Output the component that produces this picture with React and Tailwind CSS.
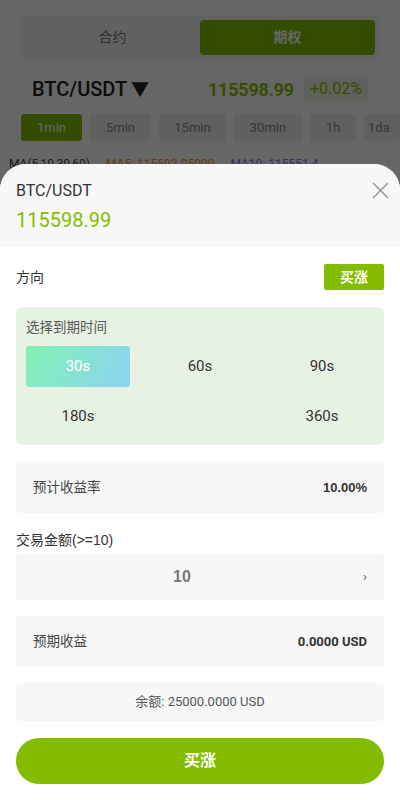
import React from "react";

const intervals = ["1min", "5min", "15min", "30min", "1h", "1day"];

export default function App() {
  return (
    <div
      className="relative w-[400px] h-[800px] overflow-hidden bg-white"
      style={{ fontFamily: "Roboto, 'Noto Sans CJK SC', sans-serif" }}
    >
      {/* Background page */}
      <div className="pt-[16px]">
        <div className="mx-[21px] h-[43px] rounded-[4px] bg-[#f3f4f5] flex items-center p-[4px]">
          <div className="flex-1 text-center text-[14px] text-[#777]">合约</div>
          <div className="w-[175px] h-[35px] rounded-[4px] bg-[#84bd00] flex items-center justify-center text-[14px] text-white font-bold">
            期权
          </div>
        </div>
        <div className="flex items-center h-[26px] mt-[17px] pl-[32px] pr-[32px]">
          <div className="text-[20px] font-medium text-[#222] flex items-center">
            BTC/USDT <span className="ml-[4px] text-[18px]">▼</span>
          </div>
          <div className="ml-auto text-[18px] font-bold text-[#84bd00] tracking-[-0.2px]">115598.99</div>
          <div className="ml-[10px] h-[24px] px-[6px] flex items-center bg-[#eaf4e4] text-[#84bd00] text-[16px]">
            +0.02%
          </div>
        </div>
        <div className="flex gap-[8px] mt-[12px] pl-[21px] whitespace-nowrap">
          {intervals.map((t, i) => (
            <div
              key={t}
              className={`h-[27px] flex items-center justify-center rounded-[3px] text-[13px] shrink-0 ${
                i === 0 ? "bg-[#84bd00] text-white" : "bg-[#eeeff0] text-[#888]"
              } ${["w-[61px]", "w-[61px]", "w-[67px]", "w-[68px]", "w-[46px]", "w-[36px] justify-start pl-[4px] overflow-hidden"][i]}`}
            >
              {i === 5 ? "1da" : t}
            </div>
          ))}
        </div>
        <div className="flex mt-[14px] text-[12px] whitespace-nowrap pl-[9px] gap-[16px]">
          <span className="text-[#444]">MA(5,10,30,60)</span>
          <span className="text-[#e69b2e]">MA5: 115592.95000</span>
          <span className="text-[#9a6fd1]">MA10: 115551.4</span>
        </div>
      </div>

      {/* Dim overlay */}
      <div className="absolute inset-0 bg-black/60" />

      {/* Bottom sheet */}
      <div className="absolute left-0 right-0 bottom-0 h-[636px] bg-white rounded-t-[26px] overflow-hidden flex flex-col">
        <div className="relative h-[83px] bg-[#f7f7f7] px-[16px] pt-[17px]">
          <div className="text-[16px] leading-[20px] text-[#333]">BTC/USDT</div>
          <div className="mt-[7px] text-[20px] leading-[24px] text-[#84bd00]">115598.99</div>
          <svg
            className="absolute right-[11px] top-[18px]"
            width="17"
            height="17"
            viewBox="0 0 17 17"
          >
            <path d="M1 1L16 16M16 1L1 16" stroke="#999" strokeWidth="1.5" fill="none" />
          </svg>
        </div>

        <div className="px-[16px] flex flex-col">
          <div className="mt-[17px] h-[26px] flex items-center justify-between">
            <span className="text-[14px] text-[#333]">方向</span>
            <div className="w-[60px] h-[26px] rounded-[2px] bg-[#84bd00] text-white text-[14px] font-bold flex items-center justify-center">
              买涨
            </div>
          </div>

          <div className="mt-[17px] h-[138px] rounded-[6px] bg-[#e8f2e4] px-[10px] pt-[12px]">
            <div className="text-[13.5px] leading-[16px] text-[#555]">选择到期时间</div>
            <div className="mt-[11px] flex flex-wrap justify-between gap-y-[9px]">
              <div
                className="w-[104px] h-[41px] rounded-[3px] flex items-center justify-center text-white text-[15px]"
                style={{ background: "linear-gradient(120deg, #80f2b2 0%, #8dd3f3 100%)" }}
              >
                30s
              </div>
              <div className="w-[104px] h-[41px] flex items-center justify-center text-[#333] text-[15px]">60s</div>
              <div className="w-[104px] h-[41px] flex items-center justify-center text-[#333] text-[15px]">90s</div>
              <div className="w-[104px] h-[41px] flex items-center justify-center text-[#333] text-[15px]">180s</div>
              <div className="w-[104px] h-[41px] flex items-center justify-center text-[#333] text-[15px]">360s</div>
            </div>
          </div>

          <div className="mt-[17px] h-[51px] rounded-[4px] bg-[#f7f7f7] px-[17px] flex items-center justify-between">
            <span className="text-[13.5px] text-[#444]">预计收益率</span>
            <span className="text-[13px] font-bold text-[#333]" style={{ fontFamily: "'Liberation Sans', sans-serif" }}>
              10.00%
            </span>
          </div>

          <div
            className="mt-[18px] text-[14px] leading-[18px] text-[#333]"
            style={{ fontFamily: "'Liberation Sans', 'Noto Sans CJK SC', sans-serif" }}
          >
            交易金额(&gt;=10)
          </div>
          <div className="mt-[5px] h-[46px] rounded-[4px] bg-[#f7f7f7] flex items-center">
            <div
              className="flex-1 text-center text-[16px] font-bold text-[#777]"
              style={{ fontFamily: "'Liberation Sans', sans-serif" }}
            >
              10
            </div>
            <span className="w-[36px] pr-[17px] text-right text-[13px] text-[#555]">›</span>
          </div>

          <div className="mt-[16px] h-[51px] rounded-[4px] bg-[#f7f7f7] px-[17px] flex items-center justify-between">
            <span className="text-[13.5px] text-[#444]">预期收益</span>
            <span className="text-[13px] font-bold text-[#333]">0.0000 USD</span>
          </div>

          <div className="mt-[16px] h-[38px] rounded-[4px] bg-[#f7f7f7] flex items-center justify-center text-[13px] text-[#555]">
            余额: 25000.0000 USD
          </div>

          <div className="mt-[17px] h-[46px] rounded-full bg-[#84bd00] flex items-center justify-center text-white text-[16px] font-bold">
            买涨
          </div>
        </div>
      </div>
    </div>
  );
}
